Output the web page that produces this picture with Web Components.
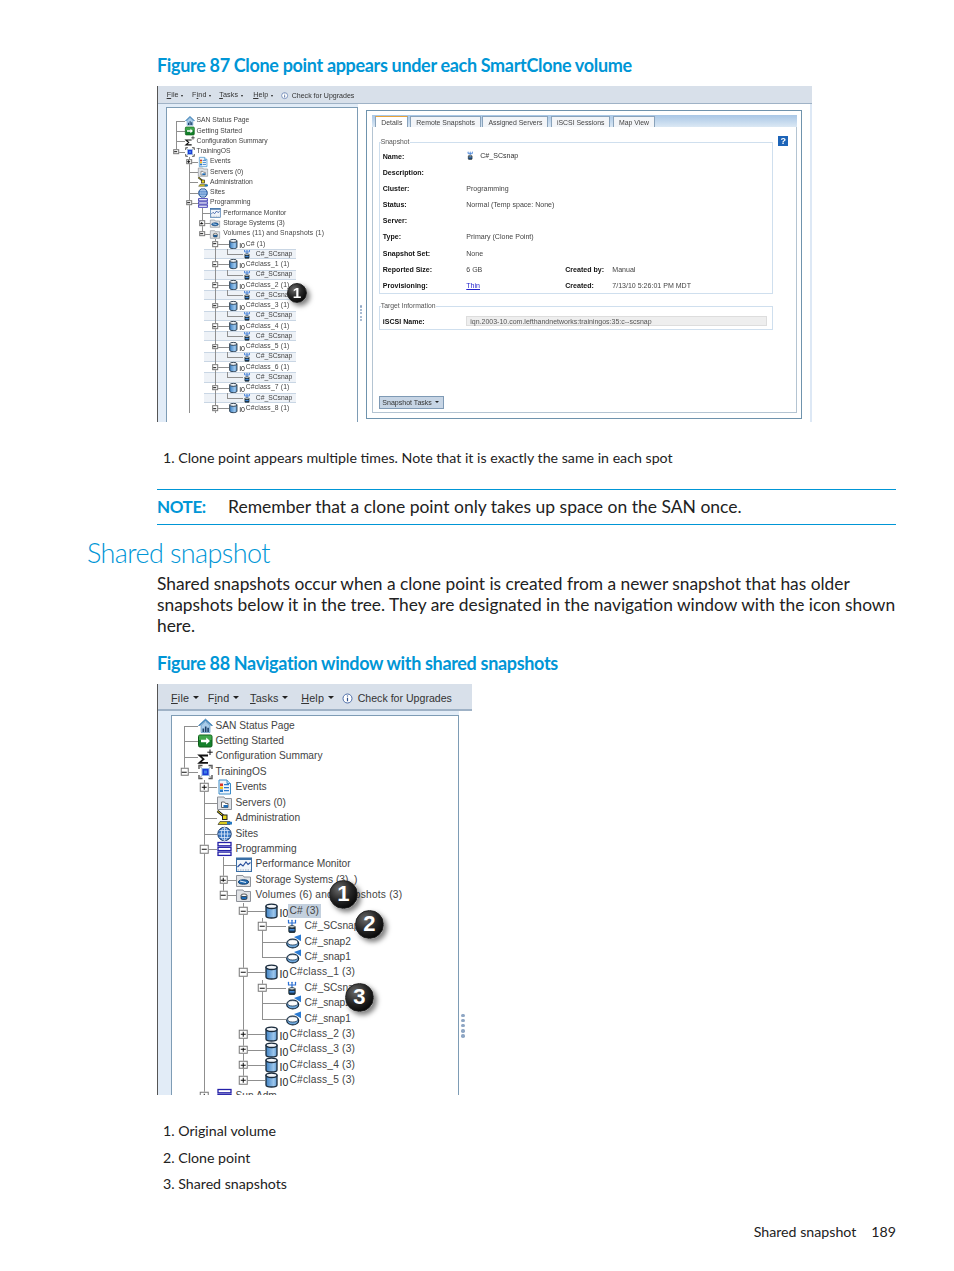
<!DOCTYPE html>
<html lang="en">
<head>
  <meta charset="UTF-8">
  <title>Shared snapshot</title>
  <style>
    html, body { margin: 0; padding: 0; background: #fff; }
    body { font-family: Lato, "Open Sans", sans-serif; color: #222; }
  </style>
</head>
<body>
  <doc-page>
    <fig-title style="margin-top:54px">Figure 87 Clone point appears under each SmartClone volume</fig-title>

    <console-shot kind="wide" style="margin-top:10px">
      <tree-row icon="home" level="0" first>SAN Status Page</tree-row>
      <tree-row icon="go" level="0">Getting Started</tree-row>
      <tree-row icon="sigma" level="0">Configuration Summary</tree-row>
      <tree-row icon="mgmt" level="0" toggle="minus" end>TrainingOS</tree-row>
      <tree-row icon="events" level="1" toggle="plus">Events</tree-row>
      <tree-row icon="folder" level="1">Servers (0)</tree-row>
      <tree-row icon="admin" level="1">Administration</tree-row>
      <tree-row icon="globe" level="1">Sites</tree-row>
      <tree-row icon="stack" level="1" toggle="minus">Programming</tree-row>
      <tree-row icon="perf" level="2" guides="1">Performance Monitor</tree-row>
      <tree-row icon="storage" level="2" toggle="plus" guides="1">Storage Systems (3)</tree-row>
      <tree-row icon="volumes" level="2" toggle="minus" guides="1" end>Volumes (11) and Snapshots (1)</tree-row>
      <tree-row icon="volume" level="3" toggle="minus" guides="1">C# (1)</tree-row>
      <tree-row icon="clone" level="4" guides="1,3" band end>C#_SCsnap</tree-row>
      <tree-row icon="volume" level="3" toggle="minus" guides="1">C#class_1 (1)</tree-row>
      <tree-row icon="clone" level="4" guides="1,3" band end>C#_SCsnap</tree-row>
      <tree-row icon="volume" level="3" toggle="minus" guides="1">C#class_2 (1)</tree-row>
      <tree-row icon="clone" level="4" guides="1,3" band end>C#_SCsnap</tree-row>
      <tree-row icon="volume" level="3" toggle="minus" guides="1">C#class_3 (1)</tree-row>
      <tree-row icon="clone" level="4" guides="1,3" band end>C#_SCsnap</tree-row>
      <tree-row icon="volume" level="3" toggle="minus" guides="1">C#class_4 (1)</tree-row>
      <tree-row icon="clone" level="4" guides="1,3" band end>C#_SCsnap</tree-row>
      <tree-row icon="volume" level="3" toggle="minus" guides="1">C#class_5 (1)</tree-row>
      <tree-row icon="clone" level="4" guides="1,3" band end>C#_SCsnap</tree-row>
      <tree-row icon="volume" level="3" toggle="minus" guides="1">C#class_6 (1)</tree-row>
      <tree-row icon="clone" level="4" guides="1,3" band end>C#_SCsnap</tree-row>
      <tree-row icon="volume" level="3" toggle="minus" guides="1">C#class_7 (1)</tree-row>
      <tree-row icon="clone" level="4" guides="1,3" band end>C#_SCsnap</tree-row>
      <tree-row icon="volume" level="3" toggle="minus" guides="1">C#class_8 (1)</tree-row>
      <call-out slot="badges" n="1" style="left:129px;top:197px"></call-out>
      <detail-pane slot="right"></detail-pane>
    </console-shot>

    <step-item style="margin-top:27px">1. Clone point appears multiple times. Note that it is exactly the same in each spot</step-item>

    <note-box style="margin-top:22px">Remember that a clone point only takes up space on the SAN once.</note-box>

    <section-head>Shared snapshot</section-head>

    <body-text>Shared snapshots occur when a clone point is created from a newer snapshot that has older snapshots below it in the tree. They are designated in the navigation window with the icon shown here.</body-text>

    <fig-title style="margin-top:16px">Figure 88 Navigation window with shared snapshots</fig-title>

    <console-shot kind="narrow" style="margin-top:10px">
      <tree-row icon="home" level="0" first>SAN Status Page</tree-row>
      <tree-row icon="go" level="0">Getting Started</tree-row>
      <tree-row icon="sigma" level="0">Configuration Summary</tree-row>
      <tree-row icon="mgmt" level="0" toggle="minus" end>TrainingOS</tree-row>
      <tree-row icon="events" level="1" toggle="plus">Events</tree-row>
      <tree-row icon="folder" level="1">Servers (0)</tree-row>
      <tree-row icon="admin" level="1">Administration</tree-row>
      <tree-row icon="globe" level="1">Sites</tree-row>
      <tree-row icon="stack" level="1" toggle="minus">Programming</tree-row>
      <tree-row icon="perf" level="2" guides="1">Performance Monitor</tree-row>
      <tree-row icon="storage" level="2" toggle="plus" guides="1">Storage Systems (3) &nbsp;)</tree-row>
      <tree-row icon="volumes" level="2" toggle="minus" guides="1" end>Volumes (6) and Snapshots (3)</tree-row>
      <tree-row icon="volume" level="3" toggle="minus" guides="1" selected>C# (3)</tree-row>
      <tree-row icon="clone" level="4" toggle="minus" guides="1,3">C#_SCsnap</tree-row>
      <tree-row icon="snap" level="4" guides="1,3">C#_snap2</tree-row>
      <tree-row icon="snap" level="4" guides="1,3" end>C#_snap1</tree-row>
      <tree-row icon="volume" level="3" toggle="minus" guides="1">C#class_1 (3)</tree-row>
      <tree-row icon="clone" level="4" toggle="minus" guides="1,3">C#_SCsnap</tree-row>
      <tree-row icon="snap" level="4" guides="1,3">C#_snap2</tree-row>
      <tree-row icon="snap" level="4" guides="1,3" end>C#_snap1</tree-row>
      <tree-row icon="volume" level="3" toggle="plus" guides="1">C#class_2 (3)</tree-row>
      <tree-row icon="volume" level="3" toggle="plus" guides="1">C#class_3 (3)</tree-row>
      <tree-row icon="volume" level="3" toggle="plus" guides="1">C#class_4 (3)</tree-row>
      <tree-row icon="volume" level="3" toggle="plus" guides="1" end>C#class_5 (3)</tree-row>
      <tree-row icon="stack" level="1" toggle="plus">Sun Adm</tree-row>
      <call-out slot="badges" n="1" big style="left:171px;top:196px"></call-out>
      <call-out slot="badges" n="2" big style="left:197px;top:226px"></call-out>
      <call-out slot="badges" n="3" big style="left:187px;top:299px"></call-out>
    </console-shot>

    <step-item style="margin-top:27px">1. Original volume</step-item>
    <step-item style="margin-top:9px">2. Clone point</step-item>
    <step-item style="margin-top:8px">3. Shared snapshots</step-item>

    <page-foot>Shared snapshot<span>189</span></page-foot>
  </doc-page>

  <script>
    const BLUE = '#0096d6';

    function simple(name, css, html) {
      customElements.define(name, class extends HTMLElement {
        constructor() {
          super();
          this.attachShadow({ mode: 'open' }).innerHTML = `<style>${css}</style>${html}`;
        }
      });
    }

    simple('doc-page', ':host{display:block;overflow:hidden;height:1271px}', '<slot></slot>');
    simple('fig-title', `:host{display:block;margin-left:157px;font:700 18px/22px Lato,sans-serif;color:${BLUE};letter-spacing:-.33px;white-space:nowrap}`, '<slot></slot>');
    simple('step-item', `:host{display:block;margin-left:163px;font:400 14.2px/18px Lato,sans-serif;color:#222;white-space:nowrap}`, '<slot></slot>');
    simple('section-head', `:host{display:block;margin:11px 0 0 87px;font:300 27px/34px Lato,sans-serif;letter-spacing:-.6px;color:${BLUE};white-space:nowrap}`, '<slot></slot>');
    simple('body-text', `:host{display:block;margin:3px 54px 0 157px;font:400 17.35px/21px Lato,sans-serif;color:#222}`, '<slot></slot>');
    simple('note-box', `
      :host{display:flex;align-items:center;margin:0 58px 0 157px;height:34px;border-top:1px solid ${BLUE};border-bottom:1px solid ${BLUE};font:400 17.5px/22px Lato,sans-serif;color:#222;white-space:nowrap}
      b{color:${BLUE};font-weight:700;font-size:17px;width:71px;letter-spacing:-.4px}`, '<b>NOTE:</b><span><slot></slot></span>');
    simple('page-foot', `:host{display:flex;justify-content:flex-end;gap:15px;margin:30px 58px 0 0;font:400 14.2px/18px Lato,sans-serif;color:#222}`, '<slot></slot>');

    // numbered black ball over the screenshot
    customElements.define('call-out', class extends HTMLElement {
      constructor() {
        super();
        this.attachShadow({ mode: 'open' }).innerHTML = `<style>
          :host{position:absolute;display:block;width:20px;height:20px;--d:20px}
          :host([big]){width:29px;height:29px;--d:29px}
          div{width:100%;height:100%;box-sizing:border-box;border-radius:50%;display:flex;align-items:center;justify-content:center;
            background:radial-gradient(circle at 35% 30%,#6a6a6a 0,#262626 45%,#060606 80%);
            border:1px solid #222;box-shadow:3px 3px 5px rgba(0,0,0,.5);
            color:#fff;font:700 calc(var(--d)*.76)/1 "Liberation Sans",sans-serif}
        </style><div></div>`;
      }
      connectedCallback() { this.shadowRoot.querySelector('div').textContent = this.getAttribute('n'); }
    });

    const ICONS = {
      home: '<path d="M7.500 .5L.5 7h1.500L7.500 2 13 7h1.500z" fill="#3f8fcb" stroke="#2d6da3" stroke-width=".6"/><path d="M3 7.200L7.500 3 12 7.200V14H3z" fill="#a9cdea" stroke="#4b87b8" stroke-width=".6"/><path d="M4.500 13.500V10h1.600v3.500zM6.900 13.500V8h1.600v5.500zM9.300 13.500V9.200h1.600v4.300z" fill="#1c3f66"/>',
      go: '<rect x=".5" y="1.500" width="13.500" height="12" rx="1.500" fill="#14802a" stroke="#0e5c18"/><rect x="1" y="2" width="12.500" height="4.500" fill="#3fa64a"/><path d="M3 6.300h5.200V4l3.800 3.500L8.200 11V8.700H3z" fill="#fff"/>',
      sigma: '<path d="M10 6H1.500L5.500 9.700 1.500 13.300H10" fill="none" stroke="#111" stroke-width="1.800"/><path d="M12 0v5.500M9.300 2.700h5.400" stroke="#111" fill="none"/>',
      mgmt: '<path d="M1 4.500V1h3.500M10.500 1H14v3.500M14 10.500V14h-3.500M4.500 14H1v-3.500" fill="none" stroke="#555" stroke-width="1.400"/><path d="M1 1l3 3M14 1l-3 3M14 14l-3-3M1 14l3-3" stroke="#888"/><rect x="4" y="4" width="7" height="7" fill="#1b3bd6" stroke="#8fb4e2"/><rect x="6" y="6" width="3" height="3" fill="#3d7fe8"/>',
      events: '<path d="M2 .5h8l3.500 3.500v10.500H2z" fill="#eef5fb" stroke="#3d8cc8"/><path d="M10 .5V4h3.500" fill="#bcdaf0" stroke="#3d8cc8"/><rect x="3" y="4" width="3" height="2.500" fill="#d8342c"/><rect x="3" y="7" width="3" height="2.500" fill="#f2c21b"/><rect x="3" y="10" width="3" height="2.500" fill="#2a78c9"/><path d="M7 5.200h5M7 8.200h5M7 11.200h5" stroke="#2a78c9" stroke-width="1.200"/>',
      folder: '<path d="M.5 1.500h6.500l1 1.500h6.500v11H.5z" fill="#dfe2e6" stroke="#8d9198"/><path d="M4.500 6.500h3l1 1.500H11v4H4.500z" fill="#fff" stroke="#444" stroke-width=".8"/><rect x="6.500" y="9.500" width="4.500" height="2.500" fill="#1f6db8"/>',
      admin: '<path d="M.5 .5l6 5" stroke="#111" stroke-width="2.400"/><path d="M.5 .5l6 5" stroke="#e2d21a"/><rect x="5.500" y="4.500" width="4.500" height="4.500" fill="#e8d71d" stroke="#222"/><path d="M3 11h10v3H1z" fill="#d6c91e" stroke="#333" stroke-width=".7"/><rect x="10" y="11.300" width="5" height="2.700" fill="#2177c4"/>',
      globe: '<circle cx="7.500" cy="7.500" r="6.700" fill="#3a78c4" stroke="#17396f"/><path d="M1 7.500h13M7.500 1v13M2.500 4h10M2.500 11h10" stroke="#dfeafa" stroke-width=".8" fill="none"/><ellipse cx="7.500" cy="7.500" rx="3.200" ry="6.500" fill="none" stroke="#dfeafa" stroke-width=".8"/>',
      stack: '<rect x="1" y="1" width="13" height="3.300" fill="#fff" stroke="#2420a8" stroke-width="1.300"/><rect x="1" y="5.800" width="13" height="3.300" fill="#fff" stroke="#2420a8" stroke-width="1.300"/><rect x="1" y="10.600" width="13" height="3.300" fill="#fff" stroke="#2420a8" stroke-width="1.300"/>',
      perf: '<rect x=".5" y=".5" width="15" height="13.500" fill="#f1f5fa" stroke="#3a6ea5"/><rect x=".5" y=".5" width="15" height="2" fill="#3a6ea5"/><path d="M1.500 9.500l3-3 2.500 2 3-4 2 2.500 2.500-2" fill="none" stroke="#234b9a" stroke-width="1.100"/><path d="M1.500 12.500h13" stroke="#9aa9bd" stroke-dasharray="1.500 1"/>',
      storage: '<path d="M.5 3h6.500l1 1.500h6.500V14H.5z" fill="#e1e3e6" stroke="#8d9198"/><ellipse cx="7.500" cy="9.500" rx="5" ry="2.200" fill="#2470b8" stroke="#123d6d"/><path d="M4 8.500l6 1.500" stroke="#e6eef8"/>',
      volumes: '<path d="M.5 2.500h6.500l1 1.500h6.500V14H.5z" fill="#e1e3e6" stroke="#8d9198"/><rect x="5" y="7.500" width="6" height="4.500" rx="1.500" fill="#1f6db8" stroke="#222" stroke-width=".7"/><ellipse cx="8" cy="7.800" rx="3" ry="1.300" fill="#fff" stroke="#222" stroke-width=".7"/>',
      volume: '<defs><linearGradient id="vg" x1="0" x2="1" y1="0" y2="0"><stop offset="0" stop-color="#3f82c4"/><stop offset=".7" stop-color="#9cc6ec"/><stop offset="1" stop-color="#5c98d0"/></linearGradient></defs><path d="M1 3v9.500c0 1.100 2.500 2 5.500 2s5.500-.9 5.500-2V3z" fill="url(#vg)" stroke="#1a2b3c" stroke-width="1.300"/><ellipse cx="6.500" cy="2.800" rx="5.500" ry="2.200" fill="#f4f7fb" stroke="#1a2b3c" stroke-width="1.300"/>',
      clone: '<g transform="translate(1 1)"><path d="M1.500 .5v3h7v-3M5 .5V7" fill="none" stroke="#2a6fd2" stroke-width="1.200"/><path d="M.7 1.200L1.500 0 2.300 1.200zM4.200 1.200L5 0 5.800 1.200zM7.700 1.200L8.500 0 9.300 1.200z" fill="#2a6fd2"/><rect x="1.800" y="7" width="6.400" height="6" rx="1" fill="#1d3550" stroke="#122" stroke-width=".8"/><rect x="2.500" y="9.500" width="5" height="1.600" fill="#3d86d6"/><ellipse cx="5" cy="7.300" rx="3.200" ry="1.100" fill="#f4f7fb" stroke="#122" stroke-width=".8"/></g>',
      snap: '<path d="M15 0V6.800L8 2.500z" fill="#2a7ad2"/><ellipse cx="6.700" cy="9" rx="6" ry="4.400" fill="#6fa8dc" stroke="#14293e" stroke-width="1.200"/><ellipse cx="6.700" cy="7.800" rx="5" ry="2.700" fill="#fbfcfe" stroke="#14293e" stroke-width=".7"/>'
    };

    // per-level x offsets, in narrow screenshot pixels from the panel's left edge
    const LEVEL_X = [12.500, 32, 51.500, 71, 90];
    const ICON_X = [26.500, 45.500, 64, 93, 114];
    const TEXT_X = [44, 64, 84, 118, 133];

    customElements.define('tree-row', class extends HTMLElement {
      constructor() {
        super();
        this.attachShadow({ mode: 'open' }).innerHTML = `<style>
          :host{display:flex;align-items:center;position:relative;height:calc(var(--u)*15.430);
            font:400 calc(var(--u)*10.200)/1 "Liberation Sans",Arial,sans-serif;color:#444;white-space:nowrap}
          .ln{position:absolute;background:#8f8f8f}
          .v{top:0;bottom:0;width:calc(var(--u)*1)}
          .hl{top:50%;height:calc(var(--u)*1)}
          .tg{position:absolute;top:50%;transform:translate(-50%,-50%);box-sizing:border-box;width:calc(var(--u)*8.500);height:calc(var(--u)*8.500);border:calc(var(--u)*1) solid #777;background:#fff}
          .tg i{position:absolute;background:#111}
          .tg .a{left:15%;right:15%;top:calc(50% - var(--u)*.5);height:calc(var(--u)*1)}
          .tg .b{top:15%;bottom:15%;left:calc(50% - var(--u)*.5);width:calc(var(--u)*1)}
          svg{position:absolute;top:50%;transform:translateY(-50%);width:calc(var(--u)*15);height:calc(var(--u)*15);overflow:visible}
          .io{position:absolute;top:calc(50% - var(--u)*3);font-size:calc(var(--u)*10.500);color:#222}
          .txt{position:relative;padding:calc(var(--u)*1.800) calc(var(--u)*2)}
          :host([selected]) .txt{background:#c3d0de}
          .band{position:absolute;top:0;bottom:0;left:calc(var(--u)*55.200);width:calc(var(--u)*138.500);background:#eef2f7;border-top:1px solid #c9d6e4;border-bottom:1px solid #c9d6e4;box-sizing:border-box}
        </style><span class="band" hidden></span><span class="parts"></span><span class="txt"><slot></slot></span>`;
      }
      connectedCallback() {
        const u = v => `calc(var(--u)*${v})`;
        const lvl = +this.getAttribute('level');
        const parts = [];
        (this.getAttribute('guides') || '').split(',').filter(Boolean).forEach(g => {
          parts.push(`<span class="ln v" style="left:${u(LEVEL_X[+g])}"></span>`);
        });
        // own vertical: half for the first and last sibling, full otherwise
        const vtop = this.hasAttribute('first') ? 'top:50%;' : '';
        const vbot = this.hasAttribute('end') ? 'bottom:50%;' : '';
        parts.push(`<span class="ln v" style="left:${u(LEVEL_X[lvl])};${vtop}${vbot}"></span>`);
        parts.push(`<span class="ln hl" style="left:${u(LEVEL_X[lvl])};width:${u(ICON_X[lvl] - LEVEL_X[lvl])}"></span>`);
        const tg = this.getAttribute('toggle');
        if (tg) parts.push(`<span class="tg" style="left:${u(LEVEL_X[lvl] + .5)}"><i class="a"></i>${tg === 'plus' ? '<i class="b"></i>' : ''}</span>`);
        const ic = this.getAttribute('icon');
        parts.push(`<svg viewBox="0 0 15 15" style="left:${u(ICON_X[lvl])}">${ICONS[ic]}</svg>`);
        if (ic === 'volume') parts.push(`<span class="io" style="left:${u(ICON_X[lvl] + 15)}">I0</span>`);
        this.shadowRoot.querySelector('.parts').innerHTML = parts.join('');
        const txt = this.shadowRoot.querySelector('.txt');
        txt.style.marginLeft = u(TEXT_X[lvl] - 2);
        if (ic === 'volume' || ic === 'volumes') txt.style.letterSpacing = u(.22);
        if (this.hasAttribute('band')) this.shadowRoot.querySelector('.band').hidden = false;
      }
    });

    simple('menu-item', `
      :host{display:inline-flex;align-items:center;gap:calc(var(--u)*3.500);font:400 calc(var(--u)*10.800)/1 "Liberation Sans",sans-serif;color:#333;letter-spacing:calc(var(--u)*.2);white-space:nowrap}
      i{width:0;height:0;border:calc(var(--u)*3) solid transparent;border-top:calc(var(--u)*3.500) solid #222;border-bottom:0}`,
      '<span><slot></slot></span><i></i>');

    customElements.define('console-shot', class extends HTMLElement {
      constructor() {
        super();
        this.attachShadow({ mode: 'open' }).innerHTML = `<style>
          :host{display:block;position:relative;margin-left:157px;overflow:hidden;box-sizing:border-box;border-left:1.500px solid #555;background:#fff}
          :host([kind=wide]){width:655px;height:336px;--u:.6654px;--navtop:5.500;--pad:11;--bartop:5;--m-find:.5;--m-tasks:-.5;--m-help:3;--m-upg:0;filter:blur(.35px)}
          :host([kind=narrow]){width:315px;height:411px;--u:1px;--navtop:4;--pad:2.500;--bartop:3.500;--m-find:-4;--m-tasks:-2;--m-help:0;--m-upg:-4.500}
          .bar{display:flex;align-items:center;gap:calc(var(--u)*13);height:calc(var(--u)*26.500);padding:calc(var(--u)*var(--bartop)) 0 0 calc(var(--u)*13);background:#d8e0ea;border-bottom:calc(var(--u)*2) solid #9fb2c6;box-sizing:border-box}
          .upg{display:inline-flex;align-items:center;gap:calc(var(--u)*4.500);margin-left:calc(var(--u)*var(--m-upg));font:400 calc(var(--u)*10.600)/1 "Liberation Sans",sans-serif;color:#333}
          .upg svg{width:calc(var(--u)*11);height:calc(var(--u)*11)}
          .find{margin-left:calc(var(--u)*var(--m-find))}
          .tasks{margin-left:calc(var(--u)*var(--m-tasks))}
          .help{margin-left:calc(var(--u)*var(--m-help))}
          .main{display:flex;background:#e2ecf7;height:100%}
          .nav{box-sizing:border-box;margin:calc(var(--u)*var(--navtop)) 0 0 calc(var(--u)*12.500);width:calc(var(--u)*288.500);border:calc(var(--u)*1.200) solid #7e9cb5;border-bottom:0;background:#fff;padding-top:calc(var(--u)*var(--pad));position:relative}
          .split{flex:1;background:#fff;position:relative}
          .dots{position:absolute;left:calc(var(--u)*2);top:calc(var(--u)*303);display:grid;gap:calc(var(--u)*1.700)}
          .dots i{width:calc(var(--u)*3.500);height:calc(var(--u)*3.500);border-radius:50%;background:#8ea6c4;display:block}
        </style>
        <div class="bar">
          <menu-item><u>F</u>ile</menu-item><menu-item class="find">F<u>i</u>nd</menu-item><menu-item class="tasks"><u>T</u>asks</menu-item><menu-item class="help"><u>H</u>elp</menu-item>
          <span class="upg"><svg viewBox="0 0 11 11"><circle cx="5.500" cy="5.500" r="4.500" fill="#fff" stroke="#4e6ea8"/><path d="M5.500 2.500v1M5.500 4.800v3.500" stroke="#2e4f8c" stroke-width="1.200"/></svg>Check for Upgrades</span>
        </div>
        <div class="main">
          <div class="nav"><slot></slot></div>
          <div class="split"><div class="dots"><i></i><i></i><i></i><i></i><i></i></div><slot name="right"></slot></div>
        </div>
        <slot name="badges"></slot>`;
      }
    });

    customElements.define('detail-pane', class extends HTMLElement {
      constructor() {
        super();
        const row = (k, v, k2, v2) => `<div class="r"><b>${k}</b><span>${v || ''}</span>${k2 ? `<b class="k2">${k2}</b><span>${v2}</span>` : ''}</div>`;
        this.attachShadow({ mode: 'open' }).innerHTML = `<style>
          :host{display:block;position:absolute;left:8px;top:0;right:10px;bottom:2px;background:#fff;font:400 7.050px/1 "Liberation Sans",sans-serif;color:#444}
          .outer{box-sizing:border-box;height:309px;margin-top:6px;border:1.200px solid #6f93ad;padding:4px 4px 4px 5px}
          .tabs{display:flex;gap:2.500px;height:12px;padding-left:3px;background:linear-gradient(#a9c7e6,#dbe8f4);align-items:flex-end}
          .tabs span{box-sizing:border-box;height:11px;padding:3px 5px 0;background:#f3f5f8;border:1px solid #8aa3bb;border-bottom:0;white-space:nowrap;font-size:6.900px}
          .tabs span:nth-child(2){margin-left:-.5px}
          .tabs span:nth-child(3){margin-left:-1px}
          .tabs .on{background:#fff;border-top:1.500px solid #e8a33a;padding:3px 5px 0}
          .body{box-sizing:border-box;height:286px;border:1px solid #b4c4d2;border-top:0;padding:13px 6px 0 6px;display:flex;flex-direction:column;position:relative}
          fieldset{margin:0;padding:0 0 0 4px;border:1px solid #cfdfee;width:394px;box-sizing:border-box}
          legend{padding:0;margin-left:-3.500px;color:#555;font-size:6.800px}
          .snap{height:155px;padding-top:3px;margin-top:-1px}
          .r{display:flex;align-items:center;height:16.100px}
          .r b{color:#111;width:83.500px;flex:none;margin-left:-1.500px}
          .r span{width:99px;flex:none;white-space:nowrap}
          .r .k2{width:47px;margin-left:0}
          a{color:#2222cc;text-decoration:underline}
          .v{display:inline-flex;gap:5px;align-items:center;color:#333}
          .v svg{width:9px;height:9px}
          .tgt{height:27px;margin-top:9px;padding-top:4px}
          .in{width:301px;height:10px;box-sizing:border-box;background:#eee;border:1px solid #ddd;padding:1px 3px;font-size:7px;white-space:nowrap;color:#555}
          .help{position:absolute;left:405px;top:9px;width:10px;height:10px;background:#1d64b8;color:#fff;font:700 9px/10px "Liberation Sans",sans-serif;text-align:center}
          .btn{position:absolute;left:6px;bottom:3px;display:flex;align-items:center;gap:3px;width:65px;height:13px;box-sizing:border-box;padding-left:2px;background:#c7d5e5;border:1px solid #7f9ab5;white-space:nowrap;color:#333}
          .btn i{border:2px solid transparent;border-top:2px solid #222;border-bottom:0}
          .grip{position:absolute;left:211px;top:318px;width:15px;height:1.500px;background:repeating-linear-gradient(90deg,#a3b7cc 0 2px,transparent 2px 3px)}
          .edge{position:absolute;right:-10px;top:0;bottom:0;width:2px;background:#dde8f5}
        </style>
        <div class="outer">
          <div class="tabs"><span class="on">Details</span><span>Remote Snapshots</span><span>Assigned Servers</span><span>iSCSI Sessions</span><span>Map View</span></div>
          <div class="body">
            <div class="help">?</div>
            <fieldset class="snap"><legend>Snapshot</legend>
              ${row('Name:', '<span class="v"><svg viewBox="0 0 13 15">' + ICONS.clone + '</svg>C#_SCsnap</span>')}
              ${row('Description:')}
              ${row('Cluster:', 'Programming')}
              ${row('Status:', 'Normal (Temp space: None)')}
              ${row('Server:')}
              ${row('Type:', 'Primary (Clone Point)')}
              ${row('Snapshot Set:', 'None')}
              ${row('Reported Size:', '6 GB', 'Created by:', 'Manual')}
              ${row('Provisioning:', '<a>Thin</a>', 'Created:', '7/13/10 5:26:01 PM MDT')}
            </fieldset>
            <fieldset class="tgt"><legend>Target Information</legend>
              <div class="r"><b>iSCSI Name:</b><div class="in">iqn.2003-10.com.lefthandnetworks:trainingos:35:c--scsnap</div></div>
            </fieldset>
            <div class="btn">Snapshot Tasks<i></i></div>
          </div>
        </div>
        <div class="grip"></div><div class="edge"></div>`;
      }
    });
  </script>
</body>
</html>
